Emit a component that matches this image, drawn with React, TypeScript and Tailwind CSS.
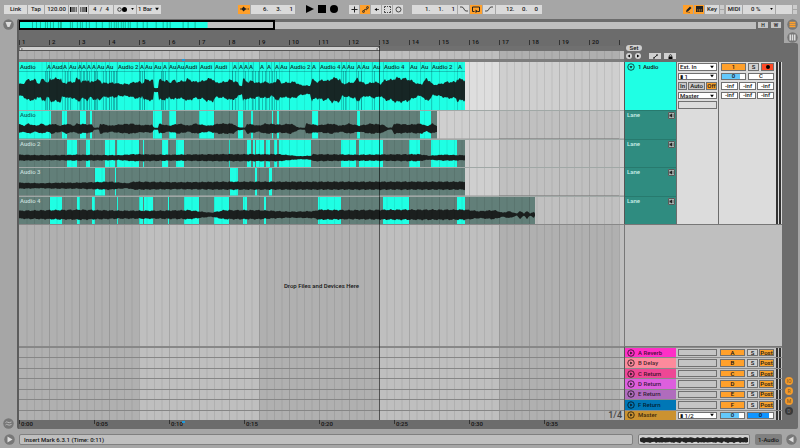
import React, { useState } from "react";
import clsx from "clsx";

// Timeline units: 30 per bar, the arrangement shows 605 of them
const SPAN = 605;
const BAR = 30;
const pct = (x: number) => `${(x / SPAN) * 100}%`;

type Range = [number, number];

// Clip starts, with as much of the name as each clip has room for
const MAIN_CLIPS: [number, string][] = [
  [0, "Audio"], [27, "A"], [32, "Aud"], [43, "A"], [49, "Au"], [58, "A"], [62, "A"], [67, "A"], [72, "A"],
  [77, "Au"], [86, "Au"], [98, "Audio 2"], [120, "A"], [125, "Au"], [134, "Au"], [143, "A"], [149, "Au"],
  [157, "Au"], [165, "Audi"], [180, "Audi"], [195, "Audi"], [213, "A"], [219, "A"], [224, "A"], [229, "A"],
  [234, ""], [240, "A"], [247, "A"], [252, ""], [255, "A"], [260, "Au"], [270, "Audio 2"], [292, "A"],
  [300, "Audio 4"], [322, "A"], [327, "Au"], [337, "A"], [342, "Au"], [353, "Au"], [364, "Audio 4"],
  [390, "Au"], [401, "Au"], [412, "Audio 2"], [438, "A"],
];
const MAIN_END = 446;

const MAIN_WAVE: Range[] = [
  [0, 6], [4, 6], [8, 10], [17, 10], [18, 7], [21, 7], [23, 11], [26, 10], [28, 7], [30, 8], [31, 11],
  [42, 11.5], [43, 7], [48, 7], [49, 8], [56, 8], [57, 11], [61, 11], [62, 8], [69, 10], [71, 7], [74, 9],
  [81, 10], [83, 7], [98, 7], [99, 6], [109, 6], [116, 8], [122, 8], [123, 6], [126, 10], [134, 10],
  [135, 2], [139, 2], [140, 10], [149, 9], [150, 7], [155, 10], [157, 8], [166, 9], [168, 11], [176, 8],
  [185, 9], [188, 11], [194, 11], [197, 7], [206, 8], [211, 10], [218, 8], [220, 5], [223, 4], [224, 11],
  [229, 8], [233, 9], [238, 7], [248, 8], [253, 6], [257, 9], [259, 11], [262, 7], [276, 8], [281, 5],
  [291, 4], [293, 11], [297, 8], [301, 9], [304, 10], [310, 9], [313, 12], [321, 11], [323, 6], [336, 8],
  [338, 12], [342, 8], [347, 6], [356, 8], [362, 6], [366, 10], [373, 10], [377, 12], [388, 11],
  [393, 9], [399, 6], [403, 6], [407, 11], [411, 9], [414, 5], [421, 6], [428, 8], [437, 8], [438, 11], [446, 10],
];

// Places where many short takes meet
const SPLICES = [
  26, 28, 30, 46, 48, 51, 61, 64, 65, 68, 70, 75, 76, 78, 84, 87, 90, 92, 94, 95, 97, 121, 123, 125, 142,
  144, 146, 213, 216, 226, 233, 236, 239, 243, 246, 250, 253, 257, 324, 326, 339, 342, 355,
];

interface Lane {
  name: string;
  end: number;
  comps: Range[];
  wave: Range[];
}

const LANES: Lane[] = [
  {
    name: "Audio",
    end: 418,
    comps: [[0, 32], [43, 48], [61, 67], [71, 73], [134, 143], [150, 157], [180, 195], [219, 224], [232, 234],
      [253, 254], [258, 260], [293, 299], [338, 341], [401, 412]],
    wave: [[0, 4.5], [5, 3], [9, 5], [17, 3], [23, 5], [28, 3], [33, 5], [42, 3], [48, 5], [55, 3], [58, 5],
      [73, 4], [75, 1], [80, 1], [81, 5], [92, 3], [98, 4], [112, 5], [122, 3.5], [133, 4], [135, 1], [139, 1],
      [140, 5], [150, 3], [160, 5], [170, 3], [176, 5], [190, 3], [200, 5], [214, 5], [219, 1.5],
      [226, 1], [228, 5], [240, 3], [246, 5], [262, 4], [272, 5], [280, 1], [286, 1], [287, 5], [300, 3.5],
      [312, 5], [322, 3], [330, 5], [340, 3], [352, 5], [364, 4], [369, 1], [373, 1], [375, 5],
      [390, 4], [402, 5], [408, 2.5], [413, 5], [418, 3]],
  },
  {
    name: "Audio 2",
    end: 446,
    comps: [[48, 58], [67, 71], [86, 96], [98, 120], [124, 125], [143, 149], [157, 165], [210, 211], [228, 232],
      [234, 236], [237, 245], [247, 251], [255, 258], [260, 292], [322, 337], [340, 364], [390, 401], [412, 438]],
    wave: [[0, 3], [30, 2.5], [60, 3], [100, 2.5], [115, 3.5], [150, 3], [200, 3.5], [260, 3.5], [280, 1.5],
      [292, 2], [294, 3.5], [340, 3], [400, 3.5], [410, 2], [425, 3], [446, 2.5]],
  },
  {
    name: "Audio 3",
    end: 446,
    comps: [[76, 86], [96, 97], [211, 219], [236, 238], [250, 253]],
    wave: [[0, 3], [22, 2.5], [40, 3], [60, 3], [90, 4], [108, 2.5], [115, 4], [160, 3.5], [210, 4], [300, 4],
      [446, 4]],
  },
  {
    name: "Audio 4",
    end: 516,
    comps: [[31, 43], [58, 61], [73, 76], [98, 99], [120, 124], [125, 134], [149, 150], [165, 180], [195, 210],
      [224, 228], [245, 247], [299, 322], [364, 390], [438, 446]],
    wave: [[0, 4], [30, 4.5], [60, 5], [100, 4], [140, 4], [170, 4.5], [192, 2], [205, 4.5], [240, 4.5], [270, 3],
      [295, 3.5], [300, 5], [330, 4.5], [380, 5], [446, 5], [460, 3.5], [475, 4.5], [484, 2], [490, 3.5],
      [498, 1], [501, 4], [505, 1], [508, 4], [511, 1], [515, 3], [516, 1]],
  },
];

const OVERVIEW_CUTS = [
  12, 16, 20, 25, 27, 30, 33, 38, 40, 41, 50, 52, 57, 60, 62, 66, 69, 76, 82, 89, 91, 94, 96, 98, 101, 103,
  105, 108, 110, 117, 123, 127, 136, 143, 147, 150, 163, 168, 175,
];

const RETURNS = [
  { name: "A Reverb", key: "A", color: "bg-[#ff2fc6]" },
  { name: "B Delay", key: "B", color: "bg-[#fd8a9c]" },
  { name: "C Return", key: "C", color: "bg-[#ee4795]" },
  { name: "D Return", key: "D", color: "bg-[#dd5fde]" },
  { name: "E Return", key: "E", color: "bg-[#b06cbd]" },
  { name: "F Return", key: "F", color: "bg-[#0077b6]" },
];

const wavePath = (points: Range[], mid: number) => {
  const end = points[points.length - 1][0];
  const top: string[] = [];
  const bottom: string[] = [];
  let i = 0;
  for (let x = points[0][0]; x <= end; x++) {
    while (i < points.length - 2 && points[i + 1][0] <= x) i++;
    const [x0, a0] = points[i];
    const [x1, a1] = points[i + 1];
    const amp = a0 + ((a1 - a0) * (x - x0)) / (x1 - x0);
    const noise = Math.sin(x * 2.1) * 0.07 + Math.sin(x * 0.9) * 0.09;
    top.push(`${x} ${(mid - amp * (1 + noise)).toFixed(1)}`);
    bottom.unshift(`${x} ${(mid + amp * (1 - noise)).toFixed(1)}`);
  }
  return `M${top.join("L")}L${bottom.join("L")}Z`;
};

/* Four-bar shading */
const Bands = ({ dark, light }: { dark: string; light: string }) => (
  <svg className="absolute inset-0 size-full" viewBox={`0 0 ${SPAN} 10`} preserveAspectRatio="none">
    <rect width={SPAN} height="10" fill={dark} />
    {[120, 360, 600].map((x) => (
      <rect key={x} x={x} width="120" height="10" fill={light} />
    ))}
  </svg>
);

const GridLines = () => (
  <svg className="absolute inset-0 size-full" viewBox={`0 0 ${SPAN} 10`} preserveAspectRatio="none">
    {Array.from({ length: 80 }, (_, i) => (
      <rect key={i} x={(i + 1) * 7.5} width="1" height="10" fill="#000" opacity={(i + 1) % 4 === 0 ? 0.13 : 0.08} />
    ))}
  </svg>
);

const box = "border border-[#707070] flex items-center justify-center leading-none min-w-0";

const Picker = ({ label, value, className }: { label: string; value: string; className?: string }) => (
  <span className={clsx("relative flex min-w-0", className)}>
    <select aria-label={label} className="w-full min-w-0 appearance-none pl-px leading-none outline-none">
      <option>{value}</option>
    </select>
    <svg className="pointer-events-none absolute top-1/2 right-0.5 h-[3px] w-1 -translate-y-1/2" viewBox="0 0 4 3">
      <path d="M0 0h4L2 3z" />
    </svg>
  </span>
);

const RoundPlay = ({ label, down }: { label: string; down?: boolean }) => (
  <button aria-label={label} className="shrink-0">
    <svg className="size-2" viewBox="0 0 16 16" fill="none" stroke="#000" strokeOpacity=".75">
      <circle cx="8" cy="8" r="6.5" strokeWidth="1.8" />
      <path d={down ? "M5 6.5h6L8 11z" : "M6.5 5v6L11 8z"} fill="#111" stroke="none" />
    </svg>
  </button>
);

const RoundIcon = ({ label, children }: { label: string; children: React.ReactNode }) => (
  <button aria-label={label} className="shrink-0">
    <svg className="size-[11px]" viewBox="0 0 22 22">
      <circle cx="11" cy="11" r="10.5" fill="#777" />
      {children}
    </svg>
  </button>
);

const Meter = () => (
  <div className="flex w-[5px] shrink-0 gap-px self-stretch">
    <div className="flex-1 bg-[#333]" />
    <div className="flex-1 bg-[#333]" />
  </div>
);

const Tool = ({
  label,
  on,
  className,
  children,
}: {
  label: string;
  on?: boolean;
  className: string;
  children?: React.ReactNode;
}) => (
  <button
    aria-label={label}
    className={clsx("flex h-[9px] items-center justify-center", on ? "bg-[#ffa02b]" : "bg-[#dadada]", className)}
  >
    {children}
  </button>
);

const stroke = { fill: "none", stroke: "#222", strokeWidth: 1.6 };

const Toolbar = () => {
  const [tempo, setTempo] = useState("120.00");

  return (
    <header className="flex h-[18px] shrink-0 items-center pr-[3px] pl-1">
      {/* Tempo and metre */}
      <div className="flex gap-px">
        <Tool label="Link" className="w-[23px]">Link</Tool>
        <Tool label="Tap" className="w-4">Tap</Tool>
        <input
          aria-label="Tempo"
          className="h-[9px] w-[23px] bg-[#dadada] pb-px text-center leading-2 outline-none"
          value={tempo}
          onChange={(e) => setTempo(e.target.value)}
        />
        <Tool label="Nudge down" className="w-[9px]">
          <svg className="h-[5px] w-[7px]" viewBox="0 0 14 10">
            <path d="M0 0h3v10H0zM5 0h2v10H5zM9 0h1.500v10H9zM12.500 0h1v10h-1z" />
          </svg>
        </Tool>
        <Tool label="Nudge up" className="w-[9px]">
          <svg className="h-[5px] w-[7px]" viewBox="0 0 14 10">
            <path d="M.5 0h1v10h-1zM3.500 0H5v10H3.500zM7 0h2v10H7zM11 0h3v10h-3z" />
          </svg>
        </Tool>
        <div className="flex h-[9px] w-6 items-center justify-between bg-[#dadada] px-1">
          <span>4</span><span>/</span><span>4</span>
        </div>
        <Tool label="Metronome" className="w-[22px] gap-1">
          <svg className="h-[5px] w-[10px]" viewBox="0 0 20 10">
            <circle cx="5" cy="5" r="3.600" {...stroke} />
            <circle cx="15" cy="5" r="5" />
          </svg>
          <svg className="h-0.5 w-[3px]" viewBox="0 0 4 3"><path d="M0 0h4L2 3z" /></svg>
        </Tool>
        <Picker label="Quantization" value="1 Bar" className="h-[9px] w-6 bg-[#dadada]" />
      </div>

      {/* Transport */}
      <div className="ml-[77px] flex items-center gap-px">
        <Tool label="Follow" on className="w-3">
          <svg className="h-[6px] w-[9px]" viewBox="0 0 18 12">
            <path d="M0 6h18" stroke="#222" strokeWidth="1.600" strokeDasharray="12 1 2 1" />
            <path d="M7 1l5 5-5 5-4-5z" fill="#222" />
          </svg>
        </Tool>
        <div className="flex h-[9px] w-11 items-center justify-between bg-[#dadada] pr-0.5 pl-3">
          <span>6.</span><span>3.</span><span>1</span>
        </div>
        <div className="ml-2.5 flex items-center gap-1">
          <button aria-label="Play">
            <svg className="size-2" viewBox="0 0 8 8"><path d="M0 0v8l8-4z" /></svg>
          </button>
          <button aria-label="Stop">
            <svg className="size-2" viewBox="0 0 8 8"><path d="M0 0h8v8H0z" /></svg>
          </button>
          <button aria-label="Record">
            <svg className="size-2" viewBox="0 0 8 8"><circle cx="4" cy="4" r="4" /></svg>
          </button>
        </div>
        <div className="ml-2.5 flex gap-px">
          <Tool label="Overdub" className="w-2.5">
            <svg className="size-[7px]" viewBox="0 0 14 14"><path d="M7 1v12M1 7h12" {...stroke} strokeWidth={2} /></svg>
          </Tool>
          <Tool label="Automation arm" on className="w-2.5">
            <svg className="size-[7px]" viewBox="0 0 14 14">
              <path d="M3 11L6 6l3 2 2-5" {...stroke} />
              <circle cx="3" cy="11" r="2" {...stroke} />
              <circle cx="11" cy="3" r="2" {...stroke} />
            </svg>
          </Tool>
          <Tool label="Re-enable automation" className="w-2.5">
            <svg className="size-[7px]" viewBox="0 0 14 14"><path d="M12 7H6" {...stroke} /><path d="M3 7l5-3v6z" /></svg>
          </Tool>
          <Tool label="Capture" className="w-2.5">
            <svg className="size-[7px]" viewBox="0 0 14 14">
              <path d="M1 4V1h3M10 1h3v3M13 10v3h-3M4 13H1v-3M6 1h2M6 13h2M1 6v2M13 6v2" {...stroke} />
            </svg>
          </Tool>
          <Tool label="Session record" className="w-2.5">
            <svg className="size-[7px]" viewBox="0 0 14 14"><circle cx="7" cy="7" r="5" {...stroke} /></svg>
          </Tool>
        </div>
      </div>

      {/* Loop */}
      <div className="ml-[9px] flex gap-px">
        <div className="flex h-[9px] w-[45px] items-center justify-between bg-[#dadada] pr-0.5 pl-[13px]">
          <span>1.</span><span>1.</span><span>1</span>
        </div>
        <Tool label="Punch in" className="w-[11px]">
          <svg className="h-[6px] w-2" viewBox="0 0 16 12"><path d="M0 2h4c4 0 4 8 8 8h4" {...stroke} /></svg>
        </Tool>
        <Tool label="Loop" on className="w-3">
          <svg className="h-[7px] w-[10px]" viewBox="0 0 20 14">
            <path d="M7 11H3V2h14v9h-4" {...stroke} strokeWidth={2} />
            <path d="M9 7v7l5-3.500z" fill="#222" />
          </svg>
        </Tool>
        <Tool label="Punch out" className="w-3">
          <svg className="h-[6px] w-2" viewBox="0 0 16 12"><path d="M0 10h4c4 0 4-8 8-8h4" {...stroke} /></svg>
        </Tool>
        <div className="flex h-[9px] w-[46px] items-center justify-between bg-[#dadada] pr-1 pl-2.5">
          <span>12.</span><span>0.</span><span>0</span>
        </div>
      </div>

      {/* Draw mode, mapping and load */}
      <div className="ml-auto flex gap-px">
        <Tool label="Draw mode" on className="w-2.5">
          <svg className="size-[7px]" viewBox="0 0 14 14"><path d="M3 8l7-7 3 3-7 7-4 1zM1 13h9v-1z" fill="#222" /></svg>
        </Tool>
        <Tool label="Computer keyboard" on className="w-2.5">
          <svg className="h-[6px] w-[7px]" viewBox="0 0 14 12">
            <path d="M0 0h14v12H0z" fill="#222" />
            <path d="M3.500 6v5M7 6v5M10.500 6v5" stroke="#ffa02b" />
          </svg>
        </Tool>
        <Tool label="Key" className="w-3.5">Key</Tool>
        <div className="flex h-[9px] w-1 flex-col gap-px"><i className="flex-1 bg-[#ccc]" /><i className="flex-1 bg-[#ccc]" /></div>
        <Tool label="MIDI" className="ml-px w-4">MIDI</Tool>
        <div className="relative flex h-[9px] w-8 items-center bg-[#dadada] pl-2">
          0 %
          <svg className="absolute right-0.5 h-0.5 w-[3px]" viewBox="0 0 4 3"><path d="M0 0h4L2 3z" /></svg>
        </div>
        <div className="h-[9px] w-4 bg-[#dadada]" />
        <div className="flex h-[9px] w-1 flex-col gap-px"><i className="flex-1 bg-[#ccc]" /><i className="flex-1 bg-[#ccc]" /></div>
      </div>
    </header>
  );
};

const Overview = () => (
  <div className="flex h-3 items-center gap-0.5 pr-[3px]">
    <div className="relative h-[10px] flex-1">
      <div className="mt-0.5 h-[7px] bg-[#bfbfbf]" />
      <div className="absolute inset-y-0 left-0 w-[34.800%] border-2 border-l border-black">
        <svg className="h-full w-[74%]" viewBox="0 0 188 10" preserveAspectRatio="none">
          <rect width="188" height="10" fill="#1fffe4" />
          {OVERVIEW_CUTS.map((x) => (
            <rect key={x} x={x} width="1" height="10" fill="#064" opacity=".45" />
          ))}
        </svg>
      </div>
    </div>
    <button className="flex h-1.5 w-2.5 items-center justify-center bg-[#c4c4c4] text-[5px]">H</button>
    <button className="ml-px flex h-1.5 w-2.5 items-center justify-center bg-[#c4c4c4] text-[5px]">W</button>
  </div>
);

const BeatRuler = () => (
  <>
    <div className="relative h-[15px]">
      {Array.from({ length: 20 }, (_, i) => (
        <span
          key={i}
          className="absolute bottom-px h-[5px] border-l border-[#333] pl-0.5 leading-[3px] text-[#111]"
          style={{ left: pct(i * BAR) }}
        >
          {i + 1}
        </span>
      ))}
      <i className="absolute bottom-px h-[5px] border-l border-[#333]" style={{ left: pct(20 * BAR) }} />
    </div>
    <div className="h-[5px] bg-[#707070]">
      <div className="flex h-full w-[59.600%] items-center justify-between border-y border-[#555] bg-[#cfcfcf]">
        <svg className="size-1" viewBox="0 0 8 8"><path d="M1 0l6 4-6 4z" fill="#eee" stroke="#222" /></svg>
        <svg className="size-1" viewBox="0 0 8 8"><path d="M7 0L1 4l6 4z" fill="#eee" stroke="#222" /></svg>
      </div>
    </div>
    <div className="relative h-2">
      <Bands dark="#afafaf" light="#bebebe" />
      <GridLines />
    </div>
    <div className="relative h-[3px] bg-[#7d7d7d]">
      <i className="absolute top-0 h-0.5 w-[3px] bg-[#1f9bdc]" style={{ left: pct(163) }} />
    </div>
  </>
);

const MainTrack = () => (
  <div className="relative h-12 overflow-hidden">
    <Bands dark="#cfcfcf" light="#dedede" />
    <svg className="absolute inset-0 size-full" viewBox={`0 0 ${SPAN} 48`} preserveAspectRatio="none">
      <rect width={MAIN_END} height="48" fill="#1fffe4" />
      {SPLICES.map((x) => (
        <rect key={x} x={x} y="9" width="1" height="39" fill="#045" opacity=".35" />
      ))}
      {MAIN_CLIPS.slice(1).map(([x]) => (
        <rect key={x} x={x} width="1" height="48" fill="#045" opacity=".22" />
      ))}
      <rect y="9" width={MAIN_END} height="1" fill="#045" opacity=".3" />
      <path d={wavePath(MAIN_WAVE, 28)} fill="#172625" />
    </svg>
    <GridLines />
    {MAIN_CLIPS.filter(([, name]) => name).map(([x, name]) => (
      <span
        key={x}
        className="absolute top-px pl-px leading-2 whitespace-nowrap text-[#083b38]"
        style={{ left: pct(x) }}
      >
        {name}
      </span>
    ))}
  </div>
);

const LaneRow = ({ lane }: { lane: Lane }) => (
  <div className="relative overflow-hidden border-t border-[#a0a8a6]">
    <Bands dark="#c0c0c0" light="#cfcfcf" />
    <svg className="absolute inset-0 size-full" viewBox={`0 0 ${SPAN} 28`} preserveAspectRatio="none">
      <rect width={lane.end} height="28" fill="#627f79" />
      {lane.comps.map(([a, b]) => (
        <rect key={a} x={a} width={b - a} height="28" fill="#1fffe4" />
      ))}
      <path d={wavePath(lane.wave, 18)} fill="#1b1f1e" />
    </svg>
    <GridLines />
    <span className={clsx("absolute top-0 left-px leading-2", lane.name === "Audio" ? "text-[#0a6e66]" : "text-[#c4dcd7]")}>
      {lane.name}
    </span>
  </div>
);

const Timeline = () => (
  <div className="relative flex min-w-0 flex-1 flex-col">
    <BeatRuler />
    <MainTrack />
    <div className="grid h-[114px] grid-rows-4">
      {LANES.map((lane) => (
        <LaneRow key={lane.name} lane={lane} />
      ))}
    </div>
    <div className="relative flex min-h-[100px] flex-1 items-center justify-center border-y border-[#888]">
      <Bands dark="#b0b0b0" light="#bfbfbf" />
      <GridLines />
      <p className="relative">Drop Files and Devices Here</p>
    </div>
    <div className="relative grid h-[73px] grid-rows-7">
      <Bands dark="#b0b0b0" light="#bfbfbf" />
      <GridLines />
      {Array.from({ length: 7 }, (_, i) => (
        <div key={i} className="relative border-t border-[#868686]">
          {i === 6 && <span className="absolute right-0.5 bottom-0 text-[9px] leading-[10px] text-[#444]">1/4</span>}
        </div>
      ))}
    </div>
    <div className="relative h-[9px]">
      {Array.from({ length: 9 }, (_, i) => i).slice(0, 8).map((i) => (
        <span
          key={i}
          className="absolute top-0 h-1 border-l border-[#333] pl-px leading-2 text-[#111]"
          style={{ left: pct(i * 75) }}
        >
          0:{String(i * 5).padStart(2, "0")}
        </span>
      ))}
      <i className="absolute top-px h-0.5 w-[3px] bg-[#1f9bdc]" style={{ left: pct(163) }} />
    </div>
    {/* Loop end */}
    <i className="absolute top-[15px] bottom-[9px] w-px bg-black/50" style={{ left: pct(360) }} />
  </div>
);

const TrackHeaders = () => (
  <div className="flex w-[160px] shrink-0 flex-col">
    {/* Locators and lock */}
    <div className="flex h-[31px] flex-col justify-end gap-0.5 pb-[3px] pl-0.5">
      <button className="flex h-[6px] w-4 items-center justify-center rounded-full bg-[#cfcfcf]">Set</button>
      <div className="flex items-center">
        <button aria-label="Previous locator">
          <svg className="size-1.5" viewBox="0 0 12 12"><circle cx="6" cy="6" r="6" fill="#d5d5d5" /><path d="M8 3v6L3 6z" /></svg>
        </button>
        <button aria-label="Next locator" className="ml-[3px]">
          <svg className="size-1.5" viewBox="0 0 12 12"><circle cx="6" cy="6" r="6" fill="#d5d5d5" /><path d="M4 3v6l5-3z" /></svg>
        </button>
        <button aria-label="Automation mode" className="ml-2 flex h-1.5 w-3 items-center justify-center bg-[#d0d0d0]">
          <svg className="size-[5px]" viewBox="0 0 10 10"><path d="M1 8l3-2 2-2 3-2" stroke="#111" strokeWidth="1.600" /><circle cx="2" cy="8" r="1.500" /><circle cx="8" cy="2" r="1.500" /></svg>
        </button>
        <button aria-label="Lock envelopes" className="ml-[3px] flex h-1.5 w-3 items-center justify-center bg-[#d0d0d0]">
          <svg className="size-[5px]" viewBox="0 0 10 10"><path d="M1 5h8v5H1z" /><path d="M3 5V2.500C3 1 7 1 7 2.500V5" fill="none" stroke="#111" strokeWidth="1.400" /></svg>
        </button>
      </div>
    </div>

    {/* Audio track */}
    <div className="flex h-[162px] border-l border-[#555] pr-0.5">
      <div className="flex w-[51px] shrink-0 flex-col">
        <div className="flex h-12 items-start gap-[3px] bg-[#1fffe4] pt-px pl-0.5 leading-2">
          <RoundPlay label="Unfold 1 Audio" down />
          1 Audio
        </div>
        <div className="grid flex-1 grid-rows-4">
          {LANES.map((lane) => (
            <div key={lane.name} className="flex items-start justify-between border-t border-[#277a6e] bg-[#2f8c80] pr-px pl-0.5 leading-2 text-[#c9efe8]">
              Lane
              <button aria-label={`Audition ${lane.name}`} className="mt-px bg-[#a9b5b2]">
                <svg className="size-[7px]" viewBox="0 0 14 14">
                  <path d="M1 1h12v12H1z" fill="none" stroke="#333" strokeWidth="1.400" />
                  <path d="M3 5h2l3-2v8L5 9H3z" fill="#222" />
                  <path d="M10 4v6" stroke="#222" />
                </svg>
              </button>
            </div>
          ))}
        </div>
      </div>
      <div className="ml-px w-[41px] shrink-0 bg-[#dcdcdc] px-px pt-px">
        <div className="grid h-[46px] grid-rows-5 gap-0.5">
          <Picker label="Input type" value="Ext. In" className="border border-[#707070] bg-white" />
          <Picker label="Input channel" value="▮ 1" className="border border-[#707070] bg-white" />
          <div className="flex gap-px">
            <button className={clsx(box, "w-[9px] bg-[#c8c8c8]")}>In</button>
            <button className={clsx(box, "w-[17px] bg-[#c8c8c8]")}>Auto</button>
            <button className={clsx(box, "flex-1 bg-[#f7a02b]")}>Off</button>
          </div>
          <Picker label="Output type" value="Master" className="border border-[#707070] bg-white" />
          <div className="border border-[#707070] bg-[#dcdcdc]" />
        </div>
      </div>
      <div className="ml-px flex min-w-0 flex-1 bg-[#dcdcdc] pr-px pl-0.5">
        <div className="grid h-[37px] min-w-0 flex-1 grid-rows-4 gap-0.5 pt-px pr-0.5">
          <div className="flex gap-0.5">
            <button className={clsx(box, "w-[25px] bg-[#ffa02b]")}>1</button>
            <button className={clsx(box, "w-[11px] bg-[#d0d0d0]")}>S</button>
            <button aria-label="Arm recording" className={clsx(box, "flex-1 bg-[#ff4a26]")}>
              <svg className="size-1" viewBox="0 0 4 4"><circle cx="2" cy="2" r="2" /></svg>
            </button>
          </div>
          <div className="flex gap-0.5">
            <div className={clsx(box, "w-[25px] bg-linear-to-r from-[#63c8fb] from-80% to-white to-80%")}>0</div>
            <div className={clsx(box, "flex-1 bg-white")}>C</div>
          </div>
          {[0, 1].map((row) => (
            <div key={row} className="flex gap-px">
              {[0, 1, 2].map((send) => (
                <div key={send} className={clsx(box, "flex-1 bg-white")}>-inf</div>
              ))}
            </div>
          ))}
        </div>
        <Meter />
      </div>
    </div>

    <div className="mr-0.5 flex-1 border-y border-l border-[#777] bg-[#bfbfbf]" />

    {/* Returns and master */}
    <div className="grid h-[73px] grid-rows-7 border-l border-[#555] pr-0.5">
      {RETURNS.map((ret) => (
        <div key={ret.key} className="flex min-w-0 border-t border-[#8a8a8a] bg-[#c4c4c4] pr-px">
          <div className={clsx("flex w-[51px] shrink-0 items-center gap-[3px] pl-0.5 leading-none text-black/75", ret.color)}>
            <RoundPlay label={`Unfold ${ret.name}`} />
            {ret.name}
          </div>
          <div className="my-px mr-px ml-0.5 w-[39px] shrink-0 border border-[#707070]" />
          <div className="my-px ml-0.5 flex min-w-0 flex-1 gap-px pr-0.5">
            <button className={clsx(box, "mr-px w-[25px] shrink-0 bg-[#ffa02b]")}>{ret.key}</button>
            <button className={clsx(box, "w-[11px] shrink-0 bg-[#d0d0d0]")}>S</button>
            <button className={clsx(box, "flex-1 bg-[#f7a02b]")}>Post</button>
          </div>
          <Meter />
        </div>
      ))}
      <div className="flex min-w-0 border-t border-[#8a8a8a] bg-[#c4c4c4] pr-px">
        <div className="flex w-[51px] shrink-0 items-center gap-[3px] bg-[#cb9230] pl-0.5 leading-none text-black/75">
          <RoundPlay label="Unfold Master" />
          Master
        </div>
        <Picker label="Master output" value="▮ 1/2" className="my-px mr-px ml-0.5 w-[39px] shrink-0 border border-[#707070] bg-white" />
        <div className="my-px ml-0.5 flex min-w-0 flex-1 gap-0.5 pr-0.5">
          <div className={clsx(box, "w-[25px] shrink-0 bg-linear-to-r from-[#63c8fb] from-80% to-white to-80%")}>0</div>
          <div className={clsx(box, "flex-1 bg-linear-to-r from-[#0f95ff] from-85% to-white to-85%")}>0</div>
        </div>
        <Meter />
      </div>
    </div>
    <div className="h-[9px]" />
  </div>
);

const SideToggle = ({ label, text, on }: { label: string; text: string; on?: boolean }) => (
  <button
    aria-label={label}
    className={clsx(
      "flex size-2 items-center justify-center rounded-full text-[5px] leading-none",
      on ? "bg-[#f59b2b] text-[#8a5f25]" : "bg-[#3a3a3a] text-[#777]"
    )}
  >
    {text}
  </button>
);

const STATUS_WAVE: Range[] = Array.from({ length: 55 }, (_, i) => [
  i * 2 + 1,
  2 + (i % 3) * 0.4 - (i % 7 === 0 ? 0.5 : 0),
]);

const App = () => {
  return (
    <div className="flex min-h-screen flex-col bg-[#a6a6a6] font-[Roboto,sans-serif] text-[6px] leading-2 font-medium text-[#151515]">
      <Toolbar />
      <main className="mt-px flex flex-1 pr-0.5">
        {/* Left strip */}
        <div className="flex w-[17px] shrink-0 flex-col items-center justify-between">
          <RoundIcon label="Hide overview"><path d="M5 6h12l-4 10H9z" fill="#ddd" /></RoundIcon>
          <RoundIcon label="Show groove">
            <path d="M5 9c3-4 5 3 12-1M5 14c3-4 5 3 12-1" fill="none" stroke="#bbb" strokeWidth="2" />
          </RoundIcon>
        </div>
        {/* Arrangement */}
        <div className="flex min-w-0 flex-1 flex-col rounded-l-xs border-l-2 border-[#5c5c5c] bg-[#6c6c6c]">
          <Overview />
          <div className="flex flex-1">
            <Timeline />
            <TrackHeaders />
          </div>
        </div>
        {/* Right strip */}
        <div className="flex w-3.5 shrink-0 flex-col">
          <div className="flex h-6 flex-col items-end gap-0.5 bg-[#a6a6a6]">
            <RoundIcon label="Arrangement view">
              <path d="M5 7h12M5 11h12M5 15h12" stroke="#ffa02b" strokeWidth="3" />
            </RoundIcon>
            <RoundIcon label="Session view">
              <path d="M5 5h3v12H5zM9.500 5h3v12h-3zM14 5h3v12h-3z" fill="#ddd" />
            </RoundIcon>
          </div>
          <div className="flex flex-1 flex-col items-center justify-end gap-0.5 rounded-r-xs bg-[#6c6c6c] pr-1 pb-3.5">
            <SideToggle label="Show I/O" text="IO" on />
            <SideToggle label="Show returns" text="R" on />
            <SideToggle label="Show mixer" text="M" on />
            <SideToggle label="Show delay" text="D" />
          </div>
        </div>
      </main>

      {/* Status bar */}
      <footer className="flex h-[19px] shrink-0 items-center pt-0.5 pr-[3px] pl-1">
        <RoundIcon label="Show info"><path d="M7 5v12l10-6z" fill="#ddd" /></RoundIcon>
        <div className="ml-1 flex h-[11px] flex-1 items-center rounded-xs border border-[#808080] bg-[#bfbfbf] pl-1">
          Insert Mark 6.3.1 (Time: 0:11)
        </div>
        <div className="ml-[5px] flex h-[11px] w-[112px] items-center rounded-xs border border-[#808080] bg-[#d0d0d0]">
          <svg className="h-2 w-full" viewBox="0 0 110 8" preserveAspectRatio="none">
            <path d={wavePath(STATUS_WAVE, 4)} fill="#222" />
          </svg>
        </div>
        <button className="ml-[5px] flex h-[11px] w-[27px] items-center justify-center rounded-xs bg-[#808080]">1-Audio</button>
        <span className="ml-1 flex"><RoundIcon label="Show detail view"><path d="M15 5v12L5 11z" fill="#ddd" /></RoundIcon></span>
      </footer>
    </div>
  );
};

export default App;
